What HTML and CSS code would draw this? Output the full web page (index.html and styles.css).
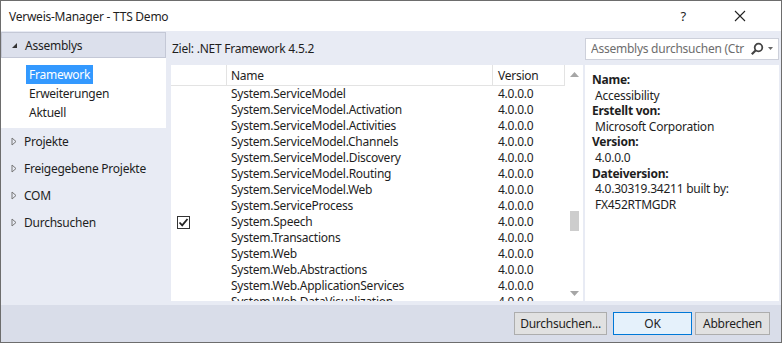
FILE: index.html
```html
<!DOCTYPE html>
<html lang="de">
<head>
    <meta charset="UTF-8">
    <title>Verweis-Manager - TTS Demo</title>
    <link rel="stylesheet" href="styles.css">
</head>
<body>
    <div class="window">
        <div class="titlebar">
            <span class="title">Verweis-Manager - TTS Demo</span>
            <span class="help">?</span>
            <svg class="close" width="12" height="12" viewBox="0 0 12 12">
                <path d="M1 1 L11 11 M11 1 L1 11" stroke="#222" stroke-width="1.1" fill="none"/>
            </svg>
        </div>

        <div class="content">
            <!-- Left navigation tree -->
            <div class="sidebar">
                <div class="group-head">
                    <svg width="7" height="7" viewBox="0 0 7 7"><path d="M6 1 L6 6 L1 6 Z" fill="#333"/></svg>
                    <span>Assemblys</span>
                </div>
                <div class="group-items">
                    <div class="item selected">Framework</div>
                    <div class="item">Erweiterungen</div>
                    <div class="item">Aktuell</div>
                </div>
                <div class="node"><svg width="6" height="9" viewBox="0 0 6 9"><path d="M1 1 L5 4.5 L1 8 Z" fill="none" stroke="#777"/></svg><span>Projekte</span></div>
                <div class="node"><svg width="6" height="9" viewBox="0 0 6 9"><path d="M1 1 L5 4.5 L1 8 Z" fill="none" stroke="#777"/></svg><span>Freigegebene Projekte</span></div>
                <div class="node"><svg width="6" height="9" viewBox="0 0 6 9"><path d="M1 1 L5 4.5 L1 8 Z" fill="none" stroke="#777"/></svg><span>COM</span></div>
                <div class="node"><svg width="6" height="9" viewBox="0 0 6 9"><path d="M1 1 L5 4.5 L1 8 Z" fill="none" stroke="#777"/></svg><span>Durchsuchen</span></div>
            </div>

            <div class="main">
                <div class="topline">
                    <span class="target">Ziel: .NET Framework 4.5.2</span>
                    <div class="search">
                        <span class="placeholder">Assemblys durchsuchen (Ctr</span>
                        <svg width="14" height="14" viewBox="0 0 14 14">
                            <circle cx="8.5" cy="5.5" r="3.8" fill="none" stroke="#444" stroke-width="1.8"/>
                            <path d="M5.8 8.2 L1.8 12.2" stroke="#444" stroke-width="2.2"/>
                        </svg>
                        <svg width="5" height="3" viewBox="0 0 5 3"><path d="M0 0 L5 0 L2.5 3 Z" fill="#666"/></svg>
                    </div>
                </div>

                <div class="panes">
                    <div class="list">
                        <div class="rows">
                            <div class="header">
                                <div class="col-check"></div>
                                <div class="col-name">Name</div>
                                <div class="col-version">Version</div>
                            </div>
                            <div class="row"><div class="col-check"></div><div class="col-name">System.ServiceModel</div><div class="col-version">4.0.0.0</div></div>
                            <div class="row"><div class="col-check"></div><div class="col-name">System.ServiceModel.Activation</div><div class="col-version">4.0.0.0</div></div>
                            <div class="row"><div class="col-check"></div><div class="col-name">System.ServiceModel.Activities</div><div class="col-version">4.0.0.0</div></div>
                            <div class="row"><div class="col-check"></div><div class="col-name">System.ServiceModel.Channels</div><div class="col-version">4.0.0.0</div></div>
                            <div class="row"><div class="col-check"></div><div class="col-name">System.ServiceModel.Discovery</div><div class="col-version">4.0.0.0</div></div>
                            <div class="row"><div class="col-check"></div><div class="col-name">System.ServiceModel.Routing</div><div class="col-version">4.0.0.0</div></div>
                            <div class="row"><div class="col-check"></div><div class="col-name">System.ServiceModel.Web</div><div class="col-version">4.0.0.0</div></div>
                            <div class="row"><div class="col-check"></div><div class="col-name">System.ServiceProcess</div><div class="col-version">4.0.0.0</div></div>
                            <div class="row">
                                <div class="col-check">
                                    <span class="checkbox">
                                        <svg width="11" height="11" viewBox="0 0 11 11"><path d="M1.5 5.5 L4.2 8.3 L9.5 2" fill="none" stroke="#222" stroke-width="1.8"/></svg>
                                    </span>
                                </div>
                                <div class="col-name">System.Speech</div><div class="col-version">4.0.0.0</div>
                            </div>
                            <div class="row"><div class="col-check"></div><div class="col-name">System.Transactions</div><div class="col-version">4.0.0.0</div></div>
                            <div class="row"><div class="col-check"></div><div class="col-name">System.Web</div><div class="col-version">4.0.0.0</div></div>
                            <div class="row"><div class="col-check"></div><div class="col-name">System.Web.Abstractions</div><div class="col-version">4.0.0.0</div></div>
                            <div class="row"><div class="col-check"></div><div class="col-name">System.Web.ApplicationServices</div><div class="col-version">4.0.0.0</div></div>
                            <div class="row"><div class="col-check"></div><div class="col-name">System.Web.DataVisualization</div><div class="col-version">4.0.0.0</div></div>
                        </div>
                        <div class="scrollbar">
                            <svg width="9" height="5" viewBox="0 0 9 5"><path d="M0 5 L9 5 L4.5 0 Z" fill="#a6a6a6"/></svg>
                            <div class="track"><div class="thumb"></div></div>
                            <svg width="9" height="5" viewBox="0 0 9 5"><path d="M0 0 L9 0 L4.5 5 Z" fill="#a6a6a6"/></svg>
                        </div>
                    </div>

                    <div class="details">
                        <div class="label">Name:</div>
                        <div class="value">Accessibility</div>
                        <div class="label">Erstellt von:</div>
                        <div class="value">Microsoft Corporation</div>
                        <div class="label">Version:</div>
                        <div class="value">4.0.0.0</div>
                        <div class="label">Dateiversion:</div>
                        <div class="value">4.0.30319.34211 built by:<br>FX452RTMGDR</div>
                    </div>
                </div>
            </div>
        </div>

        <div class="footer">
            <button class="browse">Durchsuchen...</button>
            <button class="default">OK</button>
            <button class="cancel">Abbrechen</button>
        </div>
    </div>
</body>
</html>
```

FILE: styles.css
```css
:root {
    --panel-bg: #e8ebf4;
    --footer-bg: #d9dde9;
    --text: #1e1e1e;
    --select: #3399ff;
}

* {
    box-sizing: border-box;
}

body {
    margin: 0;
    font-family: "Noto Sans", "Open Sans", sans-serif;
    font-size: 12px;
    letter-spacing: -0.25px;
    color: var(--text);
    background: #ffffff;
}

.window {
    width: 782px;
    height: 343px;
    border: 1px solid #6d6d6d;
    display: flex;
    flex-direction: column;
    overflow: hidden;
}

/* Title bar */
.titlebar {
    height: 30px;
    flex: none;
    display: flex;
    align-items: center;
    padding-left: 8px;
    background: #ffffff;
}

.title {
    flex: 1;
}

.help {
    font-size: 13px;
    margin-right: 48px;
}

.close {
    margin-right: 35px;
}

/* Body */
.content {
    flex: 1;
    display: flex;
    background: var(--panel-bg);
    min-height: 0;
}

.sidebar {
    width: 165px;
    flex: none;
    padding-top: 1px;
}

.group-head {
    height: 26px;
    display: flex;
    align-items: center;
    gap: 7px;
    padding-left: 9px;
    background: #dce0ec;
    border: 1px solid #c4c8d6;
}

.group-items {
    background: #ffffff;
    padding: 7px 0 8px 25px;
    height: 70px;
}

.item {
    height: 19px;
    line-height: 19px;
    padding: 0 3px;
    display: table;
}

.selected {
    background: var(--select);
    color: #ffffff;
}

.node {
    height: 27px;
    display: flex;
    align-items: center;
    gap: 7px;
    padding-left: 10px;
}

.node:first-of-type {
    margin-top: 1px;
}

.main {
    flex: 1;
    display: flex;
    flex-direction: column;
    padding: 0 2px 4px 5px;
    min-width: 0;
}

.topline {
    height: 34px;
    display: flex;
    align-items: center;
    justify-content: space-between;
}

.target {
    padding-left: 1px;
    padding-top: 1px;
}

.search {
    width: 194px;
    height: 22px;
    background: #ffffff;
    border: 1px solid #cdd0da;
    display: flex;
    align-items: center;
    gap: 4px;
    padding: 0 5px;
    margin-top: 1px;
}

.placeholder {
    flex: 1;
    color: #6d6d6d;
    white-space: nowrap;
    overflow: hidden;
}

.panes {
    flex: 1;
    display: flex;
    gap: 2px;
    min-height: 0;
}

/* Reference list */
.list {
    width: 412px;
    background: #ffffff;
    display: flex;
    overflow: hidden;
}

.rows {
    flex: 1;
    overflow: hidden;
}

.header,
.row {
    display: flex;
}

.header {
    height: 21px;
    align-items: center;
    border-bottom: 1px solid #e3e3e3;
}

.header > div {
    border-right: 1px solid #e3e3e3;
    height: 100%;
    display: flex;
    align-items: center;
}

.row {
    height: 16px;
    line-height: 16px;
    white-space: nowrap;
}

.col-check {
    width: 56px;
    flex: none;
    display: flex;
    align-items: center;
    padding-left: 6px;
}

.col-name {
    width: 266px;
    flex: none;
    padding-left: 4px;
}

.col-version {
    flex: 1;
    padding-left: 5px;
}

.checkbox {
    width: 13px;
    height: 13px;
    border: 1px solid #333333;
    display: flex;
    align-items: center;
    justify-content: center;
    background: #ffffff;
}

.scrollbar {
    width: 18px;
    flex: none;
    display: flex;
    flex-direction: column;
    align-items: center;
    padding: 7px 0 5px;
}

.track {
    flex: 1;
    width: 100%;
    display: flex;
    justify-content: center;
    padding-top: 134px;
}

.thumb {
    width: 9px;
    height: 20px;
    background: #cdcdcd;
}

/* Details pane */
.details {
    flex: 1;
    background: #ffffff;
    padding: 7px 6px 0 7px;
    line-height: 15.6px;
}

.label {
    font-weight: bold;
}

.value {
    padding-left: 3px;
}

/* Footer buttons */
.footer {
    height: 37px;
    flex: none;
    background: var(--footer-bg);
    display: flex;
    justify-content: flex-end;
    align-items: center;
    padding: 0 11px 1px 0;
}

button {
    font-family: inherit;
    font-size: 12px;
    letter-spacing: inherit;
    color: var(--text);
    height: 23px;
    background: #e1e1e1;
    border: 1px solid #adadad;
    padding: 0;
}

button.browse {
    width: 93px;
    margin-right: 6px;
}

button.default {
    width: 79px;
    margin-right: 3px;
    border-color: #0078d7;
    background: #e5f1fb;
}

button.cancel {
    width: 75px;
}
```
